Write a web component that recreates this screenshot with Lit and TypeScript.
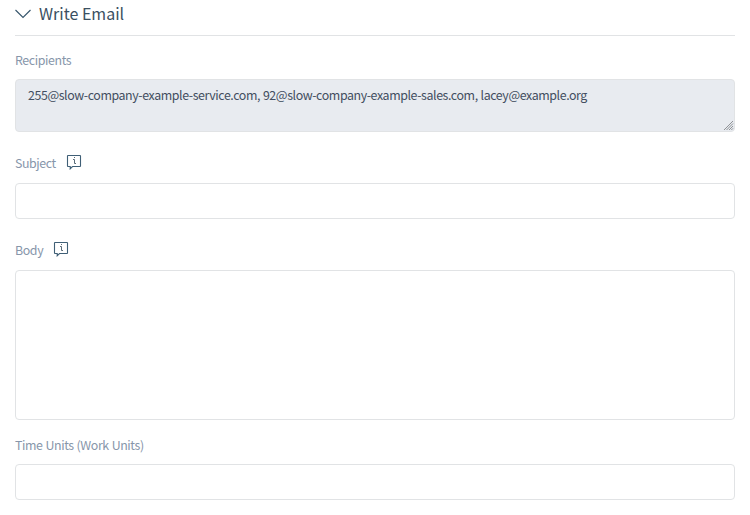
import { LitElement, html, css } from "lit";
import { customElement, property } from "lit/decorators.js";

@customElement("info-icon")
class InfoIcon extends LitElement {
  static styles = css`
    :host { display: block; width: 16px; height: 16px; }
    svg { display: block; }
  `;
  render() {
    return html`<svg width="16" height="16" viewBox="0 0 16 16" fill="none" stroke="#3f5f76" stroke-width="1.1">
      <path d="M2 1.5H14Q14.5 1.5 14.5 2V12Q14.5 12.5 14 12.5H6.5L4.2 14.8V12.5H2Q1.5 12.5 1.5 12V2Q1.5 1.5 2 1.5Z"/>
      <path d="M7 5.5H8.5V9.5H10M8.5 3V4" stroke-width="1" stroke="#5a6c79"/>
    </svg>`;
  }
}

@customElement("form-field")
class FormField extends LitElement {
  @property() label = "";
  @property({ type: Boolean }) info = false;
  static styles = css`
    :host { display: block; }
    .label { display: flex; align-items: center; height: 20px; gap: 10px; color: #8796aa; font-size: 12.4px; letter-spacing: -0.4px; word-spacing: 0.5px; line-height: 20px; margin-bottom: 9px; white-space: nowrap; }
    .label.with-info { margin-bottom: 10px; }
    info-icon { position: relative; top: -1px; }
  `;
  render() {
    return html`<div class="label ${this.info ? "with-info" : ""}"><span>${this.label}</span>${this.info ? html`<info-icon></info-icon>` : ""}</div><slot></slot>`;
  }
}

@customElement("app-root")
class AppRoot extends LitElement {
  static styles = css`
    :host { display: block; height: 515px; box-sizing: border-box; padding: 0 15px; overflow: hidden; background: #fff; font-family: "Noto Sans CJK SC", "Noto Sans", sans-serif; }
    .head { display: flex; align-items: center; gap: 8px; height: 36px; box-sizing: border-box; padding-bottom: 9px; border-bottom: 1px solid #e1e3e5; }
    h1 { margin: 0; font-size: 16px; line-height: 26px; font-weight: 400; color: #3a4f61; }
    .chevron { display: block; }
    .recipients { padding-top: 14px; }
    .subject { padding-top: 21px; }
    .body { padding-top: 21px; }
    .time { padding-top: 15px; }
    input, textarea { display: block; box-sizing: border-box; width: 100%; margin: 0; border: 1px solid #e1e3e5; border-radius: 4px; background: #fff; font: 12.4px/20px "Noto Sans CJK SC", "Noto Sans", sans-serif; letter-spacing: -0.41px; word-spacing: 0.5px; color: #434e60; outline: none; padding: 5px 12px; resize: none; }
    input { height: 36px; }
    .area { position: relative; }
    .grip { position: absolute; right: 1px; bottom: 1px; }
    .to { height: 53px; background: #e8ebf0; overflow: hidden; white-space: pre; }
    .message { height: 150px; }
  `;
  render() {
    return html`
      <div class="head">
        <svg class="chevron" width="16" height="28" viewBox="0 0 16 28" fill="none" stroke="#35556b" stroke-width="1.1"><path d="M.5 11L8 18.5L15.5 11"/></svg>
        <h1>Write Email</h1>
      </div>
      <form-field class="recipients" label="Recipients">
        <div class="area">
          <textarea class="to" readonly .value=${"255@slow-company-example-service.com, 92@slow-company-example-sales.com, lacey@example.org"}></textarea>
          <svg class="grip" width="10" height="10" viewBox="0 0 10 10" stroke="#8f9296" stroke-width="1"><path d="M0 9L9 0M2.5 9L9 2.5M5 9L9 5M7.3 9L9 7.3"/></svg>
        </div>
      </form-field>
      <form-field class="subject" label="Subject" info><input type="text" /></form-field>
      <form-field class="body" label="Body" info><textarea class="message"></textarea></form-field>
      <form-field class="time" label="Time Units (Work Units)"><input type="text" /></form-field>`;
  }
}
